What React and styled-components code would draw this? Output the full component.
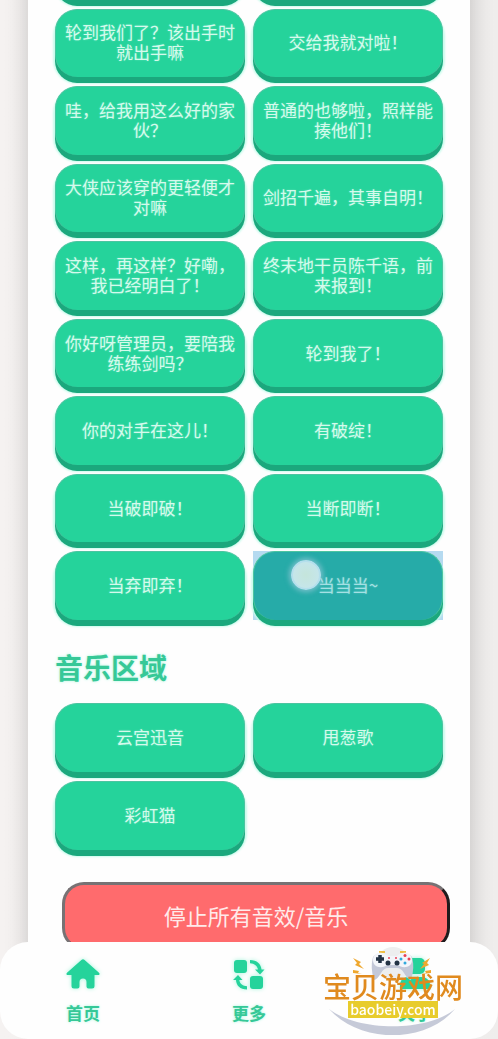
import styled, { createGlobalStyle } from "styled-components";

const GlobalStyle = createGlobalStyle`
    * {
        box-sizing: border-box;
    }

    body {
        margin: 0;
        overflow: hidden;
        background-color: #F0EEED;
        font-family: "Noto Sans CJK SC", sans-serif;
    }
`

const Page = styled.div`
    height: 100vh;
    padding: 0 28px;
    overflow: hidden;
    background: linear-gradient(90deg, #F5F2F1, #EFEDEC);
`

const Panel = styled.main`
    min-height: 100vh;
    padding: 0 27px;
    background-color: #FEFEFE;
    box-shadow: 0 0 22px 0 rgba(0, 0, 0, 0.2);
`

const ButtonGrid = styled.div`
    display: grid;
    grid-template-columns: 1fr 1fr;
    grid-template-rows: repeat(${(props) => props.$rows}, 1fr);
    gap: 9px 8px;
    height: ${(props) => props.$height}px;
    margin-top: ${(props) => props.$offset || 0}px;
`

const SoundButton = styled.button`
    padding: 0 8px 2px;
    border: 1px solid #4CC4A0;
    border-bottom: none;
    border-radius: 22px;
    background-color: ${(props) => (props.$pressed ? "#26ABA8" : "#25D39B")};
    box-shadow: 0 6px 0 0 #1BA87D, 0 5px 2px 2px #C9FBEC;
    color: ${(props) => (props.$pressed ? "#A5E0E4" : "#D5FAEC")};
    font-family: inherit;
    font-size: 17px;
    line-height: 20px;
    text-shadow: 0 0 2px rgba(200, 255, 235, 0.4);
`

const TapArea = styled.div`
    position: relative;
    display: grid;
    background-color: #B5DAF0;
`

const TouchDot = styled.span`
    position: absolute;
    top: 9px;
    left: 38px;
    width: 30px;
    height: 30px;
    border: 2px solid #B4DFEC;
    border-radius: 50%;
    background: radial-gradient(#C5E5DB, #C5E6F0);
    box-shadow: 0 0 5px 2px rgba(170, 205, 225, 0.6);
`

const SectionTitle = styled.h2`
    margin: 25px 0 14px;
    color: #36C897;
    font-size: 28px;
    font-weight: 700;
    line-height: 44px;
    text-shadow: 0 0 3px #A5F5DC;
`

const StopButton = styled.button`
    display: block;
    width: 100%;
    height: 68px;
    margin: 32px 0 0 7px;
    padding-bottom: 4px;
    border: 3px solid;
    border-color: #777274 #1F1B1C #1F1B1C #777274;
    border-radius: 22px;
    background-color: #FF6B6D;
    color: #FFEAEA;
    font-family: inherit;
    font-size: 22px;
`

const NavBar = styled.nav`
    position: fixed;
    right: 0;
    bottom: 0;
    left: 0;
    display: grid;
    grid-template-columns: repeat(3, 1fr);
    height: 97px;
    padding-top: 16px;
    border-radius: 28px;
    background-color: #FEFEFE;
`

const NavLink = styled.a`
    display: flex;
    flex-direction: column;
    align-items: center;
    gap: 7px;
    color: #36C897;
    font-size: 17px;
    font-weight: 700;
    line-height: 28px;
    text-decoration: none;
    text-shadow: 0 0 3px #A5F5DC;

    svg {
        fill: #25D39B;
        filter: drop-shadow(0 0 2px #A5F5DC);
    }
`

const Watermark = styled.div`
    position: fixed;
    right: 34px;
    bottom: 4px;
    display: flex;
    flex-direction: column;
    align-items: center;
    width: 142px;
    height: 90px;
    padding-top: 26px;
    pointer-events: none;

    svg {
        position: absolute;
        top: 0;
        left: 0;
    }
`

const WatermarkName = styled.span`
    position: relative;
    color: #E08A1E;
    font-size: 28px;
    font-weight: 500;
    line-height: 30px;
    white-space: nowrap;
`

const WatermarkSite = styled.span`
    position: relative;
    padding: 0 2px;
    background-color: #E8CC2C;
    color: #FFFFFF;
    font-size: 14px;
    font-weight: 500;
    line-height: 17px;
`

const voices = [
    "轮到我们了？该出手时就出手嘛",
    "交给我就对啦！",
    "哇，给我用这么好的家伙？",
    "普通的也够啦，照样能揍他们！",
    "大侠应该穿的更轻便才对嘛",
    "剑招千遍，其事自明！",
    "这样，再这样？好嘞，我已经明白了！",
    "终末地干员陈千语，前来报到！",
    "你好呀管理员，要陪我练练剑吗？",
    "轮到我了！",
    "你的对手在这儿！",
    "有破绽！",
    "当破即破！",
    "当断即断！",
    "当弃即弃！",
]

const songs = ["云宫迅音", "甩葱歌", "彩虹猫"];

const HomeIcon = () => (
    <svg width="34" height="34" viewBox="0 0 34 34" aria-hidden="true">
        <path d="M15.4 2.100a2.300 2.300 0 0 1 3.200 0L33 14.800c1 1 .5 2.200-.8 2.200H28.500V28a2.500 2.500 0 0 1-2.500 2.500H22.500a2 2 0 0 1-2-2V24a3.500 3.500 0 0 0-7 0v4.500a2 2 0 0 1-2 2H8a2.500 2.500 0 0 1-2.500-2.500V17H1.800C.5 17 0 15.800 1 14.800z" />
    </svg>
)

const MoreIcon = () => (
    <svg width="34" height="34" viewBox="0 0 34 34" aria-hidden="true">
        <rect x="2" y="2" width="13" height="13" rx="3" />
        <rect x="18" y="18" width="13" height="13" rx="3" />
        <path d="M18 2C25 2 29 6 29.500 11.500H32.500L28 16.500L23 11.500H26C25.500 8 22.500 5.500 18 5.200zM15 31.500C8 31.500 4.300 27.500 4 22H1L6 17L10.500 22H7.300C8 26 10.800 28 15 28.300z" />
    </svg>
)

const AboutIcon = () => (
    <svg width="34" height="34" viewBox="0 0 34 34" aria-hidden="true">
        <rect x="9" y="0" width="18" height="16" rx="5" />
        <path d="M2 31v-4c0-5 4-8 9-8h12c5 0 9 3 9 8v4z" />
    </svg>
)

const GamepadLogo = () => (
    <svg width="142" height="90" viewBox="0 0 142 90" aria-hidden="true">
        <circle cx="71" cy="19" r="17" fill="#EDEEEF" />
        <path d="M7 64C38 99 104 99 133 64C106 87 36 87 7 64z" fill="#C6CAD8" />
        <path d="M57 7h6M78 7h6" stroke="#EFBE45" strokeWidth="2" fill="none" />
        <path d="M51 12Q55 7 61 9L66 12H75L80 9Q86 7 90 12Q93 23 89 35Q86 35 82 28Q79 23 75 23H66Q62 23 59 28Q55 35 52 35Q48 23 51 12z" fill="#C3C8D8" />
        <path d="M51 15C51 6 62 6 66 11H75C79 6 90 6 90 15C90 24 79 23 76 20H65C62 23 51 24 51 15z" fill="#F3F5FA" />
        <path d="M58 10v8M54 14h8" stroke="#233345" strokeWidth="3.500" />
        <circle cx="66" cy="18" r="2.500" fill="#233345" />
        <circle cx="75" cy="18" r="2.500" fill="#233345" />
        <circle cx="67" cy="13" r="1" fill="#E94155" />
        <circle cx="74" cy="13" r="1" fill="#E94155" />
        <circle cx="83" cy="10.500" r="1.500" fill="#E94155" />
        <circle cx="83" cy="18" r="1.500" fill="#30A9DD" />
        <circle cx="79" cy="14" r="1.500" fill="#30A9DD" />
        <circle cx="87" cy="14" r="1.500" fill="#E94155" />
        <path d="M31 13L39 17L37 19L42 24L33 20L35 18zM31 25L37 26L36 28L40 29L31 28zM108 13L100 18L102 19L98 24L107 20L105 18zM109 25L103 26L104 28L100 29L109 28z" fill="#EFA82F" />
    </svg>
)

export default function App() {
    return <>
        <GlobalStyle />
        <Page>
            <Panel>
                <ButtonGrid $rows={9} $height={689} $offset={-69}>
                    <SoundButton aria-hidden="true" tabIndex={-1} />
                    <SoundButton aria-hidden="true" tabIndex={-1} />
                    {voices.map((voice) => <SoundButton key={voice}>{voice}</SoundButton>)}
                    <TapArea>
                        <SoundButton $pressed>当当当~</SoundButton>
                        <TouchDot />
                    </TapArea>
                </ButtonGrid>
                <SectionTitle>音乐区域</SectionTitle>
                <ButtonGrid $rows={2} $height={147}>
                    {songs.map((song) => <SoundButton key={song}>{song}</SoundButton>)}
                </ButtonGrid>
                <StopButton>停止所有音效/音乐</StopButton>
            </Panel>
        </Page>
        <NavBar>
            <NavLink href="#home"><HomeIcon />首页</NavLink>
            <NavLink href="#more"><MoreIcon />更多</NavLink>
            <NavLink href="#about"><AboutIcon />关于</NavLink>
        </NavBar>
        <Watermark>
            <GamepadLogo />
            <WatermarkName>宝贝游戏网</WatermarkName>
            <WatermarkSite>baobeiy.com</WatermarkSite>
        </Watermark>
    </>
}
